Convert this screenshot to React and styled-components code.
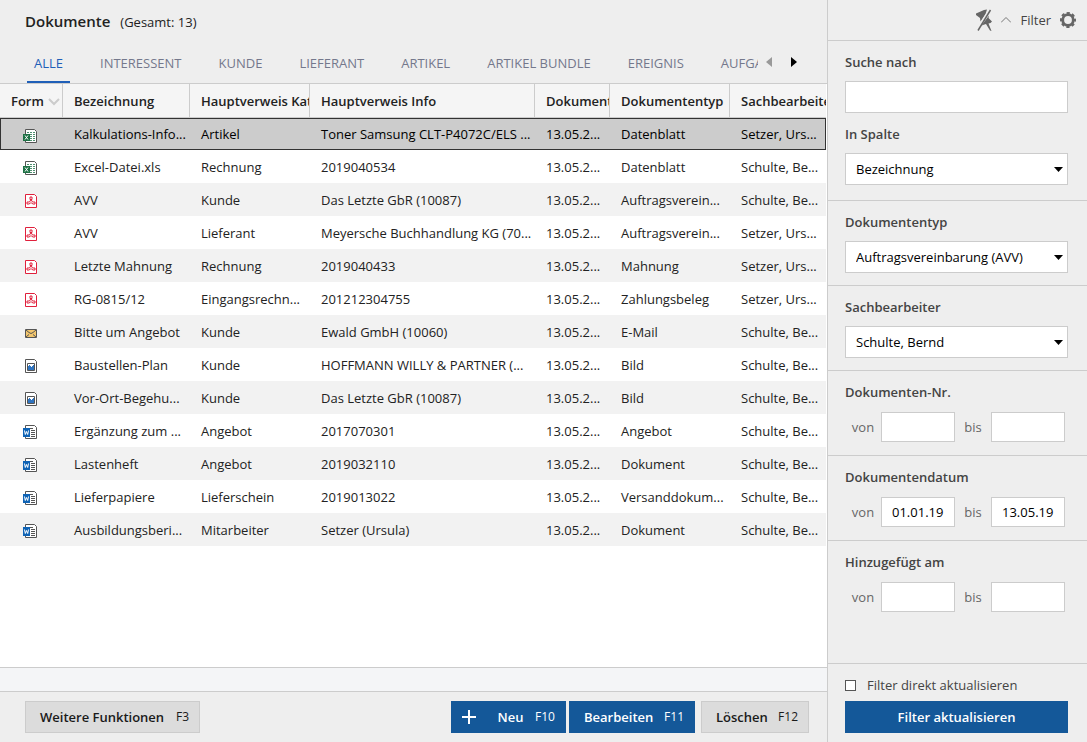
import React, { useState } from 'react';
import styled, { createGlobalStyle, css } from 'styled-components';

const GlobalStyle = createGlobalStyle`
  * { box-sizing: border-box; }
  body {
    margin: 0;
    background: #eee;
    color: #222;
    font: 13px/20px "Open Sans", "Noto Sans", sans-serif;
  }
  button, input, select { font: inherit; color: inherit; }
`;

const line = '#ccc';
const blue = '#145899';

const Page = styled.div`
  display: flex;
  min-height: 100vh;
`;
const Main = styled.main`
  flex: 1;
  min-width: 0;
  display: flex;
  flex-direction: column;
`;
const TitleBar = styled.header`
  display: flex;
  align-items: baseline;
  gap: 10px;
  height: 43px;
  padding: 11px 25px 0;
`;
const Title = styled.h1`
  margin: 0;
  font-size: 15px;
  line-height: 20px;
  font-weight: 600;
`;
const TabBar = styled.div`
  display: flex;
  height: 41px;
  padding: 0 25px 0 27px;
  border-bottom: 1px solid ${line};
`;
const Tabs = styled.nav`
  flex: 1;
  min-width: 0;
  display: flex;
  gap: 23px;
  overflow: hidden;
`;
const Tab = styled.button`
  flex: none;
  padding: 2px 7px 0;
  border: 0;
  border-bottom: 2px solid ${p => (p.$active ? '#1f5fb8' : 'transparent')};
  background: none;
  color: ${p => (p.$active ? '#1f5fb8' : '#74788c')};
  font-weight: 500;
  white-space: nowrap;
`;
const Arrows = styled.div`
  flex: none;
  display: flex;
  align-items: center;
  justify-content: space-between;
  width: 44px;
  padding: 0 5px 2px 8px;
`;
const IconButton = styled.button`
  display: flex;
  padding: 0;
  border: 0;
  background: none;
`;
const TableArea = styled.div`
  flex: 1;
  padding-right: 1px;
  background: #fff;
`;
const Table = styled.table`
  width: 100%;
  table-layout: fixed;
  border-collapse: separate;
  border-spacing: 0;
`;
const Th = styled.th`
  width: ${p => p.$width};
  height: 34px;
  padding: 0 2px 0 11px;
  overflow: hidden;
  border-right: 1px solid ${line};
  border-bottom: 1px solid ${line};
  background: #f5f5f5;
  font-weight: 600;
  text-align: left;
  white-space: nowrap;
  &:last-child { border-right: 0; }
  svg { margin-left: 4px; }
`;
const Row = styled.tr`
  height: 33px;
  &:nth-child(odd) { background: #f2f2f2; }
  ${p => p.$selected && css`
    && {
      height: 32px;
      background: #ccc;
      color: #000;
      outline: 1px solid #333;
      outline-offset: -1px;
    }
  `}
`;
const Td = styled.td`
  padding: 0 2px 0 11px;
  overflow: hidden;
  white-space: nowrap;
`;
const IconTd = styled(Td)`
  padding: 3px 2px 0 23px;
  svg { display: block; }
`;
const StatusBar = styled.div`
  height: 25px;
  border: solid ${line};
  border-width: 1px 0;
  background: #f4f5f7;
`;
const Footer = styled.footer`
  display: flex;
  gap: 3px;
  padding: 9px 18px 9px 25px;
`;
const Button = styled.button`
  display: flex;
  align-items: center;
  justify-content: space-between;
  width: ${p => p.$width};
  height: 32px;
  padding: 0 10px 0 14px;
  border: 1px solid ${p => (p.$primary ? blue : line)};
  background: ${p => (p.$primary ? blue : '#dcdcdc')};
  color: ${p => (p.$primary ? '#fff' : '#1a1a1a')};
  font-weight: 600;
  white-space: nowrap;
`;
const NewButton = styled(Button)`
  padding-left: 10px;
  margin-left: auto;
  svg { margin-right: 10px; }
`;
const DeleteButton = styled(Button)`
  margin-left: 3px;
`;
const Key = styled.span`
  font-size: 12px;
  font-weight: 400;
`;

const Sidebar = styled.aside`
  flex: none;
  display: flex;
  flex-direction: column;
  width: 260px;
  border-left: 1px solid ${line};
  color: #444;
`;
const SidebarHead = styled.div`
  display: flex;
  align-items: center;
  justify-content: flex-end;
  gap: 9px;
  height: 41px;
  padding-right: 11px;
  border-bottom: 1px solid ${line};
  font-weight: 500;
`;
const Section = styled.fieldset`
  margin: 0;
  min-width: 0;
  padding: 11px 19px 12px 17px;
  border: 0;
  border-bottom: ${p => (p.$last ? '0' : `1px solid ${line}`)};
`;
const SearchSection = styled(Section)`
  padding-bottom: 15px;
`;
const Label = styled.label`
  display: block;
  margin-bottom: 9px;
  font-weight: 600;
  * + & { margin-top: 11px; }
`;
const Input = styled.input`
  display: block;
  width: 100%;
  min-width: 0;
  height: ${p => (p.$small ? '30px' : '32px')};
  padding: 0 10px;
  border: 1px solid ${line};
  border-radius: 0;
  background: #fff;
  color: #000;
`;
const SelectBox = styled.div`
  position: relative;
  svg {
    position: absolute;
    right: 4px;
    top: 14px;
    pointer-events: none;
  }
`;
const Select = styled.select`
  display: block;
  width: 100%;
  height: 32px;
  padding: 0 20px 0 10px;
  border: 1px solid ${line};
  border-radius: 0;
  background: #fff;
  color: #000;
  appearance: none;
`;
const Range = styled.div`
  display: grid;
  grid-template-columns: 36px 1fr 36px 1fr;
  align-items: center;
  height: 32px;
  padding-right: 3px;
  color: #666;
  text-align: center;
`;
const SidebarFoot = styled.div`
  margin-top: auto;
  padding: 11px 19px 9px 17px;
  border-top: 1px solid ${line};
`;
const CheckLabel = styled.label`
  display: flex;
  align-items: center;
  gap: 11px;
  height: 20px;
  margin-bottom: 6px;
`;
const Checkbox = styled.input`
  appearance: none;
  width: 11px;
  height: 11px;
  margin: 0;
  border: 1px solid #555;
  background: #fff;
  &:checked { background: ${blue}; }
`;
const ApplyButton = styled(Button)`
  justify-content: center;
  width: 100%;
  padding: 0;
`;

const Sheet = ({ color }) => (
  <path d="M2.5.5h9l2 2v11h-11z" fill="#fff" stroke={color} />
);
const icons = {
  excel: (
    <svg width="14" height="14" viewBox="0 0 14 14">
      <Sheet color="#555" />
      <path d="M4 3.500h8M7 5.500h5M7 7.500h5M7 9.500h5M7 11.500h5" stroke="#4f9070" strokeDasharray="2 1" />
      <path d="M0 5h7v7H0z" fill="#1e7145" />
      <path d="M2 6.500l3 4M5 6.500l-3 4" stroke="#fff" />
    </svg>
  ),
  pdf: (
    <svg width="14" height="14" viewBox="0 0 14 14">
      <Sheet color="#e0203c" />
      <path d="M7 3h2v2.500H7zM8 5.500L9.500 8h2.500v2h-2L8.500 9h-1L6 10H4V8h2.500z" fill="none" stroke="#e0203c" strokeLinejoin="round" />
    </svg>
  ),
  mail: (
    <svg width="14" height="14" viewBox="0 0 14 14">
      <path d="M2.500 3.500h11v8h-11z" fill="#f3c66d" stroke="#555" />
      <path d="M3 4l3 2.500 2 1 2-1L13 4M3 11l3-2.500M13 11l-3-2.500" fill="none" stroke="#555" />
    </svg>
  ),
  image: (
    <svg width="14" height="14" viewBox="0 0 14 14">
      <Sheet color="#555" />
      <path d="M4.500 4.500h7v7h-7z" fill="#fff" stroke="#555" />
      <path d="M5 7h1V6h1v1h1v1h1V7h1V6h1v5H5z" fill="#2f74c0" />
    </svg>
  ),
  word: (
    <svg width="14" height="14" viewBox="0 0 14 14">
      <Sheet color="#555" />
      <path d="M7 3.500h3M8 5.500h4M8 7.500h4M8 9.500h4M8 11.500h4" stroke="#555" />
      <path d="M0 3h7v9H0z" fill="#0f63b5" />
      <path d="M1.500 5.500l.8 4 1.200-3 1.200 3 .8-4" fill="none" stroke="#fff" />
    </svg>
  ),
};

const NoPinIcon = () => (
  <svg width="16" height="22" viewBox="0 0 16 22">
    <path d="M0 4.500L8 1l3-.5L9.500 5 4.500 12.500 4 9 0 6z" fill="#666" />
    <path d="M13 6.500L12.500 9l3.500 3.500-1.500 1.500-2 .5 3 7.500-1.500-.5-4-6.500-4.500 1.500z" fill="#666" />
    <path d="M13 .5L1.500 19" stroke="#eee" />
    <path d="M14.500 1L2 21.500" stroke="#666" strokeWidth="1.500" />
  </svg>
);
const GearIcon = () => (
  <svg width="16" height="16" viewBox="0 0 16 16">
    <circle cx="8" cy="8" r="5.300" fill="none" stroke="#666" strokeWidth="2.800" />
    <circle cx="8" cy="8" r="7" fill="none" stroke="#666" strokeWidth="2" strokeDasharray="3.200 2.298" strokeDashoffset="1.600" />
  </svg>
);
const DropArrow = () => (
  <svg width="10" height="5" viewBox="0 0 10 5">
    <path d="M0 0h9L4.500 5z" fill="#000" />
  </svg>
);

const tabs = ['ALLE', 'INTERESSENT', 'KUNDE', 'LIEFERANT', 'ARTIKEL', 'ARTIKEL BUNDLE', 'EREIGNIS', 'AUFGABE'];

const columns = [
  ['Form', '63px'],
  ['Bezeichnung', '127px'],
  ['Hauptverweis Kat', '120px'],
  ['Hauptverweis Info', 'auto'],
  ['Dokument', '75px'],
  ['Dokumententyp', '120px'],
  ['Sachbearbeiter', '96px'],
];

const rows = [
  ['excel', 'Kalkulations-Info...', 'Artikel', 'Toner Samsung CLT-P4072C/ELS ...', '13.05.2...', 'Datenblatt', 'Setzer, Urs...'],
  ['excel', 'Excel-Datei.xls', 'Rechnung', '2019040534', '13.05.2...', 'Datenblatt', 'Schulte, Be...'],
  ['pdf', 'AVV', 'Kunde', 'Das Letzte GbR (10087)', '13.05.2...', 'Auftragsverein...', 'Schulte, Be...'],
  ['pdf', 'AVV', 'Lieferant', 'Meyersche Buchhandlung KG (70...', '13.05.2...', 'Auftragsverein...', 'Setzer, Urs...'],
  ['pdf', 'Letzte Mahnung', 'Rechnung', '2019040433', '13.05.2...', 'Mahnung', 'Setzer, Urs...'],
  ['pdf', 'RG-0815/12', 'Eingangsrechn...', '201212304755', '13.05.2...', 'Zahlungsbeleg', 'Setzer, Urs...'],
  ['mail', 'Bitte um Angebot', 'Kunde', 'Ewald GmbH (10060)', '13.05.2...', 'E-Mail', 'Schulte, Be...'],
  ['image', 'Baustellen-Plan', 'Kunde', 'HOFFMANN WILLY & PARTNER (...', '13.05.2...', 'Bild', 'Schulte, Be...'],
  ['image', 'Vor-Ort-Begehu...', 'Kunde', 'Das Letzte GbR (10087)', '13.05.2...', 'Bild', 'Schulte, Be...'],
  ['word', 'Ergänzung zum ...', 'Angebot', '2017070301', '13.05.2...', 'Angebot', 'Schulte, Be...'],
  ['word', 'Lastenheft', 'Angebot', '2019032110', '13.05.2...', 'Dokument', 'Schulte, Be...'],
  ['word', 'Lieferpapiere', 'Lieferschein', '2019013022', '13.05.2...', 'Versanddokum...', 'Schulte, Be...'],
  ['word', 'Ausbildungsberi...', 'Mitarbeiter', 'Setzer (Ursula)', '13.05.2...', 'Dokument', 'Schulte, Be...'],
];

const SelectField = ({ id, label, options }) => (
  <>
    <Label htmlFor={id}>{label}</Label>
    <SelectBox>
      <Select id={id}>
        {options.map(o => <option key={o}>{o}</option>)}
      </Select>
      <DropArrow />
    </SelectBox>
  </>
);

const RangeField = ({ id, label, from = '', to = '' }) => (
  <>
    <Label as="div">{label}</Label>
    <Range>
      <label htmlFor={`${id}-von`}>von</label>
      <Input $small id={`${id}-von`} defaultValue={from} />
      <label htmlFor={`${id}-bis`}>bis</label>
      <Input $small id={`${id}-bis`} defaultValue={to} />
    </Range>
  </>
);

const DocumentTable = ({ selected, onSelect }) => (
  <Table>
    <thead>
      <tr>
        {columns.map(([name, width], i) => (
          <Th key={name} $width={width}>
            {name}
            {i === 0 && (
              <svg width="12" height="8" viewBox="0 0 12 8">
                <path d="M1 1l5 5 5-5" fill="none" stroke="#ccc" strokeWidth="2" />
              </svg>
            )}
          </Th>
        ))}
      </tr>
    </thead>
    <tbody>
      {rows.map(([icon, ...cells], i) => (
        <Row key={i} $selected={i === selected} onClick={() => onSelect(i)}>
          <IconTd>{icons[icon]}</IconTd>
          {cells.map((cell, j) => <Td key={j}>{cell}</Td>)}
        </Row>
      ))}
    </tbody>
  </Table>
);

const App = () => {
  const [tab, setTab] = useState('ALLE');
  const [selected, setSelected] = useState(0);
  return (
    <Page>
      <GlobalStyle />
      <Main>
        <TitleBar>
          <Title>Dokumente</Title>
          <span>(Gesamt: 13)</span>
        </TitleBar>
        <TabBar>
          <Tabs>
            {tabs.map(t => (
              <Tab key={t} $active={t === tab} onClick={() => setTab(t)}>{t}</Tab>
            ))}
          </Tabs>
          <Arrows>
            <IconButton aria-label="Zurück">
              <svg width="6" height="10" viewBox="0 0 6 10"><path d="M6 0v10L0 5z" fill="#999" /></svg>
            </IconButton>
            <IconButton aria-label="Weiter">
              <svg width="6" height="10" viewBox="0 0 6 10"><path d="M0 0v10l6-5z" fill="#000" /></svg>
            </IconButton>
          </Arrows>
        </TabBar>
        <TableArea>
          <DocumentTable selected={selected} onSelect={setSelected} />
        </TableArea>
        <StatusBar />
        <Footer>
          <Button $width="175px">Weitere Funktionen <Key>F3</Key></Button>
          <NewButton $primary $width="115px">
            <svg width="14" height="14" viewBox="0 0 14 14">
              <path d="M7 0v14M0 7h14" stroke="#fff" strokeWidth="2" />
            </svg>
            Neu <Key>F10</Key>
          </NewButton>
          <Button $primary $width="126px">Bearbeiten <Key>F11</Key></Button>
          <DeleteButton $width="108px">Löschen <Key>F12</Key></DeleteButton>
        </Footer>
      </Main>
      <Sidebar>
        <SidebarHead>
          <NoPinIcon />
          <svg width="10" height="6" viewBox="0 0 10 6">
            <path d="M0 5.500l5-5 5 5" fill="none" stroke="#777" />
          </svg>
          <span>Filter</span>
          <IconButton aria-label="Einstellungen"><GearIcon /></IconButton>
        </SidebarHead>
        <SearchSection>
          <Label htmlFor="suche">Suche nach</Label>
          <Input id="suche" />
          <SelectField id="spalte" label="In Spalte" options={['Bezeichnung', 'Hauptverweis Info']} />
        </SearchSection>
        <Section>
          <SelectField id="typ" label="Dokumententyp" options={['Auftragsvereinbarung (AVV)', 'Datenblatt']} />
        </Section>
        <Section>
          <SelectField id="bearbeiter" label="Sachbearbeiter" options={['Schulte, Bernd', 'Setzer, Ursula']} />
        </Section>
        <Section>
          <RangeField id="nr" label="Dokumenten-Nr." />
        </Section>
        <Section>
          <RangeField id="datum" label="Dokumentendatum" from="01.01.19" to="13.05.19" />
        </Section>
        <Section $last>
          <RangeField id="hinzu" label="Hinzugefügt am" />
        </Section>
        <SidebarFoot>
          <CheckLabel>
            <Checkbox type="checkbox" />
            Filter direkt aktualisieren
          </CheckLabel>
          <ApplyButton $primary>Filter aktualisieren</ApplyButton>
        </SidebarFoot>
      </Sidebar>
    </Page>
  );
};

export default App;
